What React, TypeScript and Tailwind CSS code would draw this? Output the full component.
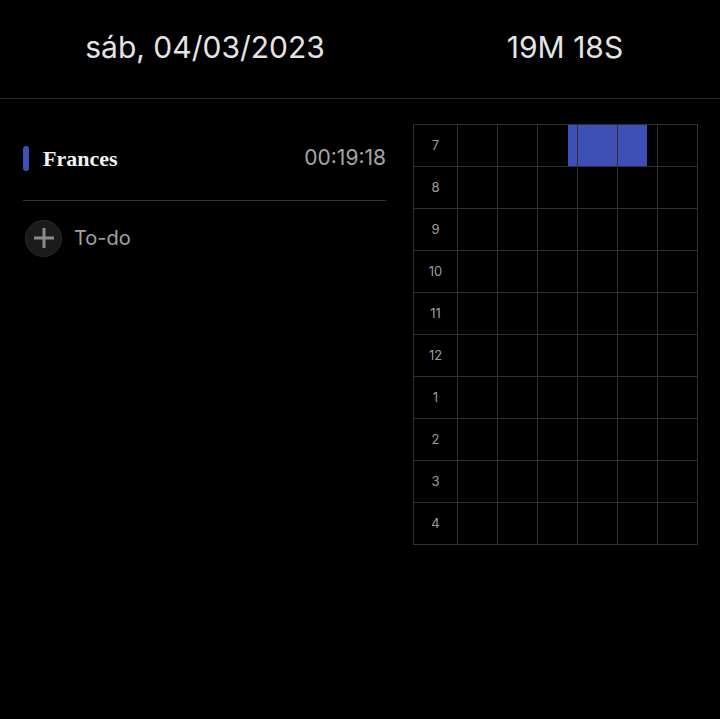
import React from 'react';

const HOURS = ['7', '8', '9', '10', '11', '12', '1', '2', '3', '4'];

// blue fill per cell of the first hour row: [left offset px, width px]
const FILLS: Record<number, [number, number]> = {
  2: [30, 9],
  3: [0, 39],
  4: [0, 29],
};

const Header: React.FC = () => (
  <div className="flex h-[99px] border-b border-[#2f2f2f] text-[30px] text-[#e4e4e4] font-['Inter',sans-serif]">
    <div className="w-[410px] flex items-center justify-center pb-[4px]">sáb, 04/03/2023</div>
    <div className="flex-1 flex items-center justify-center pb-[4px]">19M 18S</div>
  </div>
);

const TaskList: React.FC = () => (
  <div className="w-[410px] pl-[23px] pr-[24px]">
    <div className="h-[68px] flex items-center">
      <div className="w-[6px] h-[25px] rounded-full bg-[#3f4fb8]" />
      <span className="ml-[14px] text-[22px] font-bold text-[#f2f2f2] font-['Liberation_Serif',serif]">Frances</span>
      <span className="ml-auto text-[21px] text-[#a6a6a6] font-['Inter',sans-serif]">00:19:18</span>
    </div>
    <div className="mt-[8px] h-px bg-[#363636]" />
    <div className="mt-[18px] flex items-center h-[38px]">
      <div className="ml-[2px] w-[37px] h-[37px] rounded-full bg-[#1a1a1a] border border-[#2a2a2a] flex items-center justify-center">
        <svg width="22" height="22" viewBox="0 0 22 22">
          <path d="M11 1v20M1 11h20" stroke="#8a8a8a" strokeWidth="3" />
        </svg>
      </div>
      <span className="ml-[12px] text-[20px] text-[#a3a3a3] font-['Inter',sans-serif]">To-do</span>
    </div>
  </div>
);

const Timeline: React.FC = () => (
  <div className="pl-[3px]">
    <div className="inline-grid grid-cols-[43px_repeat(6,39px)] auto-rows-[41px] gap-px p-px bg-[#303030]">
      {HOURS.map((h, r) => (
        <React.Fragment key={h}>
          <div className="bg-black flex items-center justify-center text-[13px] text-[#9c9c9c] font-['Inter',sans-serif]">
            {h}
          </div>
          {[0, 1, 2, 3, 4, 5].map(c => {
            const fill = r === 0 ? FILLS[c] : undefined;
            return (
              <div key={c} className="bg-black flex">
                {fill && (
                  <div
                    className="h-full bg-[#3f4fb8]"
                    style={{ marginLeft: fill[0], width: fill[1] }}
                  />
                )}
              </div>
            );
          })}
        </React.Fragment>
      ))}
    </div>
  </div>
);

export default function App() {
  return (
    <div className="w-[720px] h-[719px] bg-black overflow-hidden">
      <Header />
      <div className="flex pt-[25px]">
        <TaskList />
        <Timeline />
      </div>
    </div>
  );
}
